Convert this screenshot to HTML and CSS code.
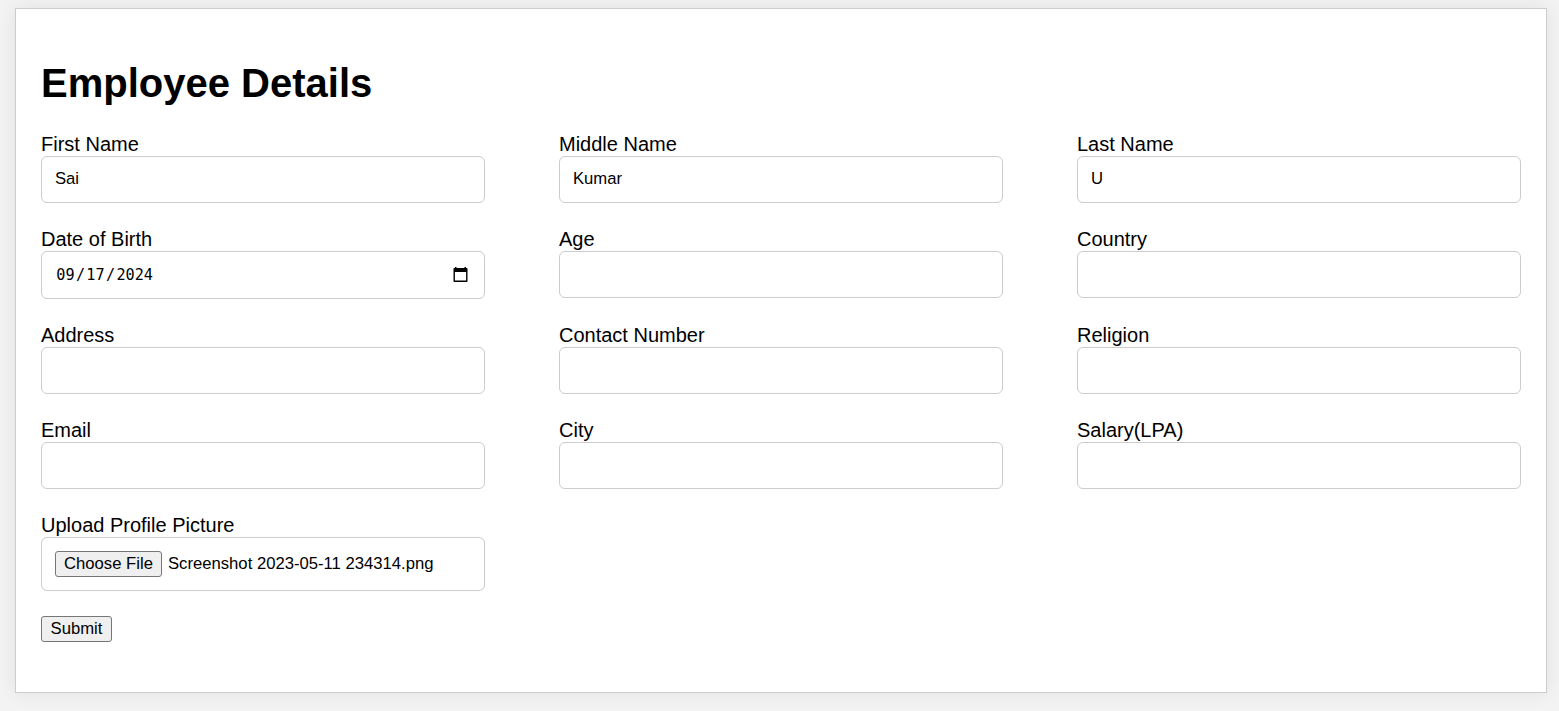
FILE: index.html
```html
<!DOCTYPE html>
<html lang="en">
<head>
<meta charset="utf-8">
<title>Employee Details</title>
<link rel="stylesheet" href="styles.css">
</head>
<body>
<form class="card">
  <h1 class="title">Employee Details</h1>
  <div class="fields">
    <label class="field">First Name<input class="control" type="text" value="Sai"></label>
    <label class="field">Middle Name<input class="control" type="text" value="Kumar"></label>
    <label class="field">Last Name<input class="control" type="text" value="U"></label>
    <div class="field">Date of Birth
      <div class="control date">
        <span class="part">09</span><span class="slash">/</span><span class="part">17</span><span class="slash">/</span><span class="part">2024</span>
        <svg class="calendar" width="15" height="16" viewBox="0 0 15 16"><path fill="#000" d="M2 0h1.500v1h8V0H13v1h.7q.8 0 .8.8v12.400q0 .8-.8.8H1.300q-.8 0-.8-.8V1.800q0-.8.8-.8H2zM1.900 5v8.600h11.200V5z"/></svg>
      </div>
    </div>
    <label class="field">Age<input class="control" type="text"></label>
    <label class="field">Country<input class="control" type="text"></label>
    <label class="field">Address<input class="control" type="text"></label>
    <label class="field">Contact Number<input class="control" type="text"></label>
    <label class="field">Religion<input class="control" type="text"></label>
    <label class="field">Email<input class="control" type="text"></label>
    <label class="field">City<input class="control" type="text"></label>
    <label class="field">Salary(LPA)<input class="control" type="text"></label>
    <div class="field">Upload Profile Picture
      <div class="control file">
        <button class="button choose" type="button">Choose File</button>
        <span class="filename">Screenshot 2023-05-11 234314.png</span>
      </div>
    </div>
  </div>
  <button class="button submit" type="button">Submit</button>
</form>
</body>
</html>
```

FILE: styles.css
```css
* { box-sizing: border-box; }
body {
  margin: 0;
  padding: 8px 12px 0 15px;
  height: 711px;
  overflow: hidden;
  background: #f3f3f3;
  color: #000;
  font: 20px/24px "Liberation Sans", Arial, sans-serif;
}
.card {
  height: 685px;
  padding: 51px 25px 0;
  background: #fff;
  border: 1px solid #ccc;
  box-shadow: 0 0 19px rgba(0, 0, 0, 0.08);
}
.title {
  margin: 0 0 26px;
  font-size: 40px;
  line-height: 46px;
  font-weight: bold;
}
.fields {
  display: grid;
  grid-template-columns: repeat(3, 444px);
  column-gap: 74px;
  row-gap: 24px;
}
.field { display: block; }
.control {
  display: block;
  width: 100%;
  height: 47px;
  padding: 0 13px 2px;
  background: #fff;
  border: 1px solid #ccc;
  border-radius: 6px;
  color: #000;
  font: 16.667px/20px "Liberation Sans", Arial, sans-serif;
}
.date {
  display: flex;
  align-items: center;
  height: 48px;
  padding-bottom: 0;
  font-family: "DejaVu Sans Mono", monospace;
  font-size: 15.2px;
}
.part { padding: 0 1.3px; }
.calendar { margin-left: auto; margin-right: 3px; }
.file {
  display: flex;
  align-items: center;
  height: 54px;
  padding-bottom: 0;
}
.button {
  height: 26px;
  padding: 0;
  background: #efefef;
  border: 1px solid #767676;
  border-radius: 3px;
  color: #000;
  font: 16.667px/20px "Liberation Sans", Arial, sans-serif;
}
.choose { width: 107px; margin-right: 6px; }
.submit { display: block; width: 71px; margin-top: 25px; }
```
